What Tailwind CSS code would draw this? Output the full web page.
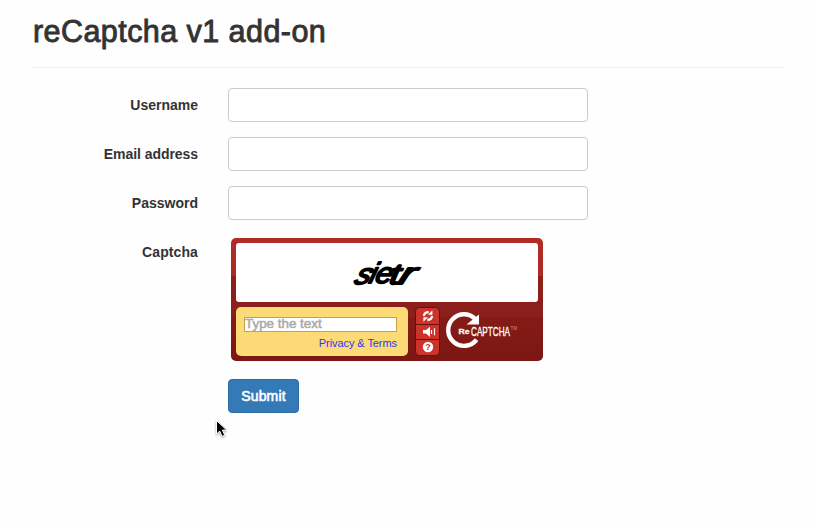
<!DOCTYPE html>
<html lang="en">
<head>
<meta charset="utf-8">
<title>reCaptcha v1 add-on</title>
<script src="https://cdn.jsdelivr.net/npm/@tailwindcss/browser@4"></script>
</head>
<body class="relative h-[526px] overflow-hidden bg-[#fefefe] font-['Liberation_Sans',sans-serif] text-sm text-[#333]">
<main class="mx-[33px] w-[750px]">
  <header class="h-[68px] border-b border-[#eee] pt-[15px]">
    <h1 class="w-fit text-[30.5px] leading-[33px] font-normal whitespace-nowrap tracking-[0.44px] [-webkit-text-stroke:0.9px_#333]">reCaptcha v1 add-on</h1>
  </header>
  <form class="flex flex-col gap-[15px] pt-5">
    <div class="flex gap-[30px]">
      <label for="u" class="w-[165px] pt-[7px] text-right leading-5 font-bold">Username</label>
      <input id="u" type="text" class="h-[34px] w-[360px] rounded border border-[#ccc] bg-white px-3">
    </div>
    <div class="flex gap-[30px]">
      <label for="e" class="w-[165px] pt-[7px] text-right leading-5 font-bold tracking-[-0.05px]">Email address</label>
      <input id="e" type="text" class="h-[34px] w-[360px] rounded border border-[#ccc] bg-white px-3">
    </div>
    <div class="flex gap-[30px]">
      <label for="p" class="w-[165px] pt-[7px] text-right leading-5 font-bold">Password</label>
      <input id="p" type="password" class="h-[34px] w-[360px] rounded border border-[#ccc] bg-white px-3">
    </div>
    <div class="flex h-[129px]">
      <span class="w-[165px] pt-[7px] text-right leading-5 font-bold tracking-[0.1px]">Captcha</span>
      <section class="mt-[3px] ml-[33px] flex h-[123px] w-[312px] flex-col gap-[5px] rounded-[5px] bg-[linear-gradient(#b12c26_0,#ae2a24_38px,#8e1f1b_38px,#8b1f1b_79px,#851b17_79px,#7c1713_100%)] p-[5px]">
        <div class="h-[59px] rounded-[3px] bg-white">
          <svg class="block" width="302" height="59" viewBox="236 243 302 59" font-family="Liberation Sans" font-style="italic" font-size="29" fill="#000" stroke="#000" stroke-width="1.8" stroke-linejoin="round">
            <text transform="translate(353 284) skewX(-24) scale(1.05 1)">s</text>
            <text transform="translate(368 283) skewX(-16)">i</text>
            <text transform="translate(374 282.5) skewX(-14) scale(1.05 1)">e</text>
            <text transform="translate(388.5 284) skewX(-10) scale(1.3 1)">t</text>
            <text transform="translate(397 284) skewX(-20) scale(1.6 1.05)">r</text>
          </svg>
        </div>
        <div class="flex">
          <div class="flex h-[49px] w-[172px] flex-col items-end rounded-[5px] bg-[#fcda75] pt-[10px] pr-[11px] pl-2">
            <input type="text" placeholder="Type the text" class="h-[15px] w-[153px] border border-[#c3a44b] bg-white pb-[2px] text-[13.4px] leading-[13px] placeholder:text-[#a9a9a9] placeholder:[-webkit-text-stroke:.5px_#a9a9a9]">
            <a class="mt-[5px] text-[11px] leading-[13px] tracking-[-0.07px] whitespace-nowrap text-[#2b35ff]">Privacy &amp; Terms</a>
          </div>
          <svg class="ml-[7px] block" width="105" height="49" viewBox="415 307 105 49">
            <rect x="415.5" y="307.5" width="24" height="48" rx="4" fill="#cb332b" stroke="#65100e"/>
            <path d="M416 324.5h23M416 339.5h23" stroke="#65100e"/>
            <path d="M423.9 316q.3-3.9 4.8-3.9M432.1 315.8q-.3 4-4.8 4.1" fill="none" stroke="#fff" stroke-width="2.2"/>
            <path d="M428 314.8l4.4-4.6v4.6zM428 317.2l-4.6 4.6v-4.6z" fill="#fff"/>
            <path d="M423 330h3l4-3.3v10.2l-4-3.4h-3z" fill="#fff"/>
            <path d="M431.5 330v4M434.5 328.3v7" stroke="#fff" stroke-width="1.2"/>
            <circle cx="428" cy="347" r="5.2" fill="#fff"/>
            <text x="428" y="350.2" text-anchor="middle" font-family="Liberation Sans" font-weight="bold" font-size="9" fill="#cb332b">?</text>
            <path d="M475.5 319.2A15.8 15.8 0 1 0 476.6 339.6" fill="none" stroke="#fff" stroke-width="4.4"/>
            <path d="M479 314.5v10h-12.5z" fill="#fff"/>
            <text x="458.5" y="333.5" font-family="Liberation Sans" font-weight="bold" font-size="8" textLength="11" lengthAdjust="spacingAndGlyphs" fill="#fff" stroke="#fff" stroke-width=".3">Re</text>
            <text transform="translate(471 335.5) scale(.655 1)" font-family="Liberation Sans" font-size="12.5" fill="#fff" stroke="#fff" stroke-width=".3">CAPTCHA</text>
            <text x="510.5" y="329.5" font-family="Liberation Sans" font-size="4.6" fill="#d08d87">TM</text>
          </svg>
        </div>
      </section>
    </div>
    <button type="button" class="ml-[195px] h-[34px] w-[71px] rounded border border-[#2e6da4] bg-[#337ab7] text-sm leading-5 tracking-[0.15px] text-white [-webkit-text-stroke:.6px_white]">Submit</button>
  </form>
</main>
<svg class="absolute top-[419px] left-[214px] drop-shadow-[0_1px_1px_rgba(0,0,0,.35)]" width="15" height="20" viewBox="0 0 15 20"><path d="M2.5 1.5v13.6l3.2-3 2.4 5.3 2.6-1.2-2.3-5.1h4.3z" fill="#000" stroke="#fff"/></svg>
</body>
</html>
